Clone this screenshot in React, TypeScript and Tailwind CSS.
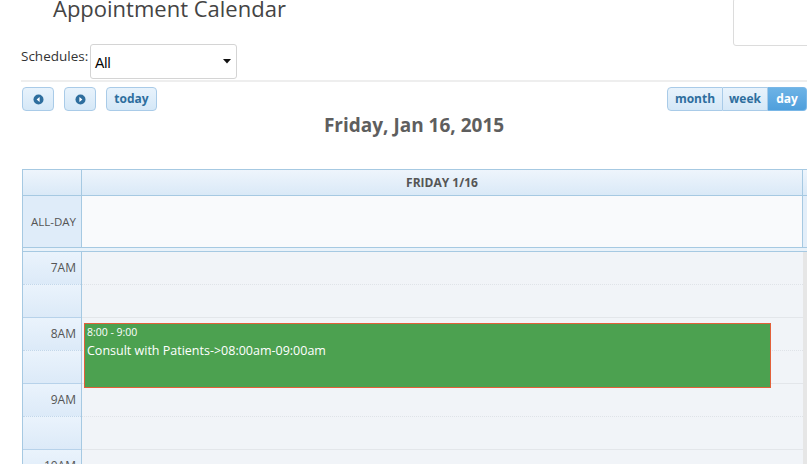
import React from "react";

const hours = ["7AM", "8AM", "9AM", "10AM", "11AM"];

function CircleArrow({ dir }: { dir: "w" | "e" }) {
  return (
    <svg width="11" height="11" viewBox="0 0 11 11">
      <circle cx="5.5" cy="5.5" r="5" fill="#2e6e9e" />
      {dir === "w" ? (
        <polygon points="6.6,3 3.6,5.5 6.6,8" fill="#fff" />
      ) : (
        <polygon points="4.4,3 7.4,5.5 4.4,8" fill="#fff" />
      )}
    </svg>
  );
}

export default function App() {
  return (
    <div className="h-[464px] w-[807px] overflow-hidden bg-white font-['Open_Sans',sans-serif]">
      {/* page header */}
      <div className="flex h-[44px]">
        <h1 className="-mt-[3px] pl-[53px] text-[22px] leading-[22px] text-[#444]">Appointment Calendar</h1>
        <div className="-mt-[2px] ml-auto h-[48px] w-[80px] -mr-[6px] rounded-[3px] border border-[#dcdcdc]" />
      </div>

      <div className="flex h-[35px] items-start pl-[21px]">
        <span className="mt-[3px] w-[69px] text-[13.5px] leading-[18px] text-[#333]">Schedules:</span>
        <div className="flex h-[35px] w-[147px] items-center justify-between rounded-[3px] border border-[#d4d4d4] pl-[4px] pr-[5px]">
          <span className="mt-[4px] font-['Liberation_Sans',sans-serif] text-[14px] text-black">All</span>
          <svg width="8" height="5" viewBox="0 0 8 5">
            <polygon points="0,0 8,0 4,4.5" fill="#111" />
          </svg>
        </div>
      </div>

      <div className="ml-[21px] mt-[1px] border-t-2 border-[#eeeeee]" />

      {/* toolbar */}
      <div className="mt-[5px] flex h-[24px] justify-between pl-[22px]">
        <div className="flex gap-[10px] font-bold">
          <button type="button" className="flex w-[32px] items-center justify-center rounded-[4px] border border-[#a9cbe8] bg-gradient-to-b from-[#e8f3fc] to-[#d5e8f7]">
            <CircleArrow dir="w" />
          </button>
          <button type="button" className="flex w-[32px] items-center justify-center rounded-[4px] border border-[#a9cbe8] bg-gradient-to-b from-[#e8f3fc] to-[#d5e8f7]">
            <CircleArrow dir="e" />
          </button>
          <button type="button" className="w-[51px] rounded-[4px] border border-[#a9cbe8] bg-gradient-to-b from-[#e8f3fc] to-[#d5e8f7] text-[12px] font-bold text-[#2e6e9e]">
            today
          </button>
        </div>
        <div className="flex text-[12px] font-bold">
          <button type="button" className="w-[56px] rounded-l-[4px] border border-[#a9cbe8] bg-gradient-to-b from-[#e8f3fc] to-[#d5e8f7] text-[#2e6e9e]">
            month
          </button>
          <button type="button" className="w-[45px] border-y border-r border-[#a9cbe8] bg-gradient-to-b from-[#e8f3fc] to-[#d5e8f7] text-[#2e6e9e]">
            week
          </button>
          <button type="button" className="w-[39px] rounded-r-[4px] border-y border-r border-[#79b7e7] bg-gradient-to-b from-[#6db3e6] to-[#4f9fdc] text-white">
            day
          </button>
        </div>
      </div>

      <h2 className="mt-[1px] pl-[21px] text-center text-[19px] font-bold leading-[26px] text-[#5e5e5e]">Friday, Jan 16, 2015</h2>

      {/* calendar */}
      <div className="ml-[22px] mt-[31px] w-[800px] border-l border-t border-[#a6c9e2]">
        <div className="flex h-[26px] border-b border-[#a6c9e2] bg-gradient-to-b from-[#eef5fc] to-[#dae9f7]">
          <div className="w-[59px] border-r border-[#a6c9e2]" />
          <div className="flex w-[721px] items-center justify-center border-r border-[#a6c9e2] text-[12px] font-bold text-[#555]">
            FRIDAY 1/16
          </div>
          <div className="flex-1" />
        </div>
        <div className="flex h-[52px] border-b border-[#a6c9e2]">
          <div className="flex w-[59px] items-center justify-end border-r border-[#a6c9e2] bg-[#dfecf9] pr-[5px] text-[11.5px] text-[#555]">
            ALL-DAY
          </div>
          <div className="w-[721px] border-r border-[#a6c9e2] bg-[#f9fafc]" />
          <div className="flex-1 bg-[#e3eef9]" />
        </div>
        <div className="h-[4px] border-b border-[#a6c9e2] bg-[#e9f2fa]" />

        <div className="flex">
          <div className="w-[59px] border-r border-[#a6c9e2]">
            {hours.map((h) => (
              <div key={h}>
                <div className="flex h-[33px] items-center justify-end border-b border-dotted border-[#c3d7ea] bg-gradient-to-b from-[#eaf3fc] to-[#dceaf8] pr-[5px] text-[12px] text-[#555]">
                  {h}
                </div>
                <div className="h-[33px] border-b border-[#b7d2ea] bg-gradient-to-b from-[#eaf3fc] to-[#dceaf8]" />
              </div>
            ))}
          </div>
          <div className="relative w-[721px] bg-[#f1f4f8]">
            {hours.map((h) => (
              <div key={h}>
                <div className="h-[33px] border-b border-dotted border-[#dfe3e8]" />
                <div className="h-[33px] border-b border-[#e3e6ea]" />
              </div>
            ))}
            <div className="absolute left-[2px] top-[71px] h-[65px] w-[687px] border border-[#e2603a] bg-[#4ca150] pl-[2px] text-white">
              <div className="pt-[1px] text-[10.5px] leading-[14px]">8:00 - 9:00</div>
              <div className="mt-[4px] text-[12.5px] leading-[16px]">Consult with Patients-&gt;08:00am-09:00am</div>
            </div>
          </div>
          <div className="w-[6px] bg-[#e6e6e6]" />
        </div>
      </div>
    </div>
  );
}
